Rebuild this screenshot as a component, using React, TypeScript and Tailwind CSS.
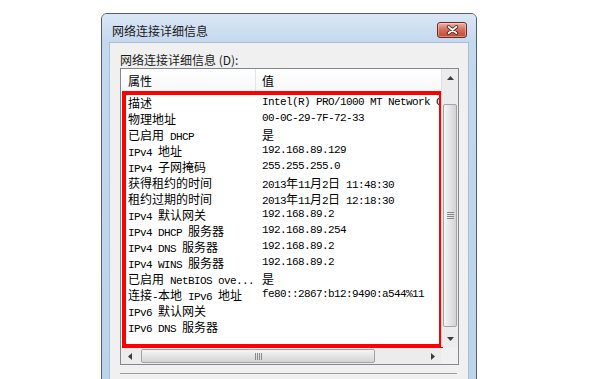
import React from "react";

const rows: [string, string][] = [
  ["描述", "Intel(R) PRO/1000 MT Network C"],
  ["物理地址", "00-0C-29-7F-72-33"],
  ["已启用 DHCP", "是"],
  ["IPv4 地址", "192.168.89.129"],
  ["IPv4 子网掩码", "255.255.255.0"],
  ["获得租约的时间", "2013年11月2日 11:48:30"],
  ["租约过期的时间", "2013年11月2日 12:18:30"],
  ["IPv4 默认网关", "192.168.89.2"],
  ["IPv4 DHCP 服务器", "192.168.89.254"],
  ["IPv4 DNS 服务器", "192.168.89.2"],
  ["IPv4 WINS 服务器", "192.168.89.2"],
  ["已启用 NetBIOS ove...", "是"],
  ["连接-本地 IPv6 地址", "fe80::2867:b12:9490:a544%11"],
  ["IPv6 默认网关", ""],
  ["IPv6 DNS 服务器", ""],
];

function T({ s }: { s: string }) {
  const parts = s.split(/([\x00-\x7F]+)/).filter((p) => p.length > 0);
  return (
    <div className="flex items-baseline h-[16px] whitespace-nowrap">
      {parts.map((p, i) =>
        /^[\x00-\x7F]+$/.test(p) ? (
          <span
            key={i}
            className="block h-[14px] leading-[14px] font-['Liberation_Mono',monospace] text-[11px] tracking-[-0.6px] whitespace-pre"
          >
            {p}
          </span>
        ) : (
          <span
            key={i}
            className="block h-[16px] leading-[16px] font-['Noto_Sans_CJK_SC',sans-serif] text-[12px]"
          >
            {p}
          </span>
        )
      )}
    </div>
  );
}

function ArrowUp() {
  return (
    <svg width="7" height="4" viewBox="0 0 7 4">
      <path d="M3.5 0 L7 4 L0 4 Z" fill="#3c3c3c" />
    </svg>
  );
}
function ArrowDown() {
  return (
    <svg width="7" height="4" viewBox="0 0 7 4">
      <path d="M0 0 L7 0 L3.5 4 Z" fill="#3c3c3c" />
    </svg>
  );
}
function ArrowLeft() {
  return (
    <svg width="4" height="7" viewBox="0 0 4 7">
      <path d="M4 0 L4 7 L0 3.5 Z" fill="#3c3c3c" />
    </svg>
  );
}
function ArrowRight() {
  return (
    <svg width="4" height="7" viewBox="0 0 4 7">
      <path d="M0 0 L4 3.5 L0 7 Z" fill="#3c3c3c" />
    </svg>
  );
}

function CloseBtn() {
  return (
    <div className="w-[30px] h-[16px] rounded-[3px] border border-[#6b2a22] bg-linear-to-b from-[#eab1a6] via-[#d36b58] to-[#c24a35] flex items-center justify-center shadow-[inset_0_0_0_1px_rgba(255,255,255,0.35)]">
      <svg width="13" height="10" viewBox="0 0 13 10">
        <path d="M2.5 1.8 L10.5 8.2 M10.5 1.8 L2.5 8.2" stroke="#4a1c16" strokeWidth="3.4" strokeLinecap="round" />
        <path d="M2.5 1.8 L10.5 8.2 M10.5 1.8 L2.5 8.2" stroke="#ffffff" strokeWidth="1.8" strokeLinecap="round" />
      </svg>
    </div>
  );
}

function VScroll() {
  return (
    <div className="relative z-10 w-[17px] flex flex-col bg-[#ececec] border-l border-[#e0e0e0]">
      <div className="h-[17px] flex items-center justify-center">
        <ArrowUp />
      </div>
      <div className="flex-1 flex flex-col pt-[18px] pb-[3px] px-[1px]">
        <div className="flex-1 rounded-[2px] border border-[#a3a3a3] bg-linear-to-r from-[#f6f6f6] to-[#d3d3d3] flex flex-col items-center justify-center gap-[1px]">
          <div className="w-[7px] h-[1px] bg-[#8a8a8a]" />
          <div className="w-[7px] h-[1px] bg-[#8a8a8a]" />
          <div className="w-[7px] h-[1px] bg-[#8a8a8a]" />
          <div className="w-[7px] h-[1px] bg-[#8a8a8a]" />
        </div>
      </div>
      <div className="h-[17px] flex items-center justify-center">
        <ArrowDown />
      </div>
    </div>
  );
}

function HScroll() {
  return (
    <div className="h-[17px] flex bg-[#ececec] border-t border-[#e0e0e0]">
      <div className="w-[17px] flex items-center justify-center">
        <ArrowLeft />
      </div>
      <div className="flex-1 flex py-[1px] pl-[3px]">
        <div className="w-[234px] rounded-[2px] border border-[#a3a3a3] bg-linear-to-b from-[#f6f6f6] to-[#d3d3d3] flex items-center justify-center gap-[1px]">
          <div className="w-[1px] h-[7px] bg-[#8a8a8a]" />
          <div className="w-[1px] h-[7px] bg-[#8a8a8a]" />
          <div className="w-[1px] h-[7px] bg-[#8a8a8a]" />
          <div className="w-[1px] h-[7px] bg-[#8a8a8a]" />
        </div>
      </div>
      <div className="w-[17px] flex items-center justify-center">
        <ArrowRight />
      </div>
    </div>
  );
}

export default function App() {
  return (
    <div className="relative w-[600px] h-[379px] overflow-hidden bg-white font-['Noto_Sans_CJK_SC',sans-serif] text-black">
      <div className="pl-[101px] pt-[13px]">
        <div className="w-[376px] rounded-t-[6px] border border-[#55606c] bg-[#c3d7ed] flex flex-col">
          {/* title bar */}
          <div className="h-[28px] flex items-start justify-between rounded-t-[5px] bg-linear-to-b from-[#dbe7f4] to-[#c4d8ee]">
            <div className="pl-[10px] pt-[9px] text-[12px] leading-[16px] text-[#1b1b1b]">网络连接详细信息</div>
            <div className="pt-[8px] pr-[9px]">
              <CloseBtn />
            </div>
          </div>
          {/* body */}
          <div className="flex">
            <div className="w-[7px] bg-linear-to-b from-[#c4d8ee] to-[#bcd3ec]" />
            <div className="w-[360px] h-[360px] bg-[#f0f0f0] border border-[#a9bdd4] pt-[9px] pl-[10px]">
              <div className="text-[12px] leading-[16px] text-[#1b1b1b]">网络连接详细信息 (D):</div>
              <div className="w-[339px] h-[297px] border border-[#828790] bg-white flex flex-col">
                <div className="flex flex-1 min-h-0">
                  <div className="flex-1 min-w-0 flex flex-col">
                    {/* header */}
                    <div className="h-[24px] flex bg-linear-to-b from-[#ffffff] to-[#f6f7f9] border-b border-[#eef0f3]">
                      <div className="w-[135px] pl-[7px] flex items-center text-[12px] leading-[16px] border-r border-[#e3e5e8]">属性</div>
                      <div className="pl-[6px] flex items-center text-[12px] leading-[16px]">值</div>
                    </div>
                    {/* rows */}
                    <div className="flex flex-col pt-[2px]">
                      {rows.map(([k, v], i) => (
                        <div key={i} className="h-[16px] flex">
                          <div className="w-[135px] shrink-0 pl-[7px]">
                            <T s={k} />
                          </div>
                          <div className="pl-[6px]">
                            <T s={v} />
                          </div>
                        </div>
                      ))}
                    </div>
                  </div>
                  <VScroll />
                </div>
                <div className="flex">
                  <div className="flex-1">
                    <HScroll />
                  </div>
                  <div className="w-[17px] h-[17px] bg-[#f0f0f0]" />
                </div>
              </div>
              <div className="mt-[8px] w-[337px] border-t border-[#a0a0a0] h-[1px] bg-white" />
            </div>
            <div className="w-[7px] bg-linear-to-b from-[#c4d8ee] to-[#bcd3ec]" />
          </div>
        </div>
      </div>
      {/* red annotation box */}
      <div className="absolute left-[122px] top-[91px] w-[321px] h-[257px] border-[4px] border-[#ff0000]" />
    </div>
  );
}
